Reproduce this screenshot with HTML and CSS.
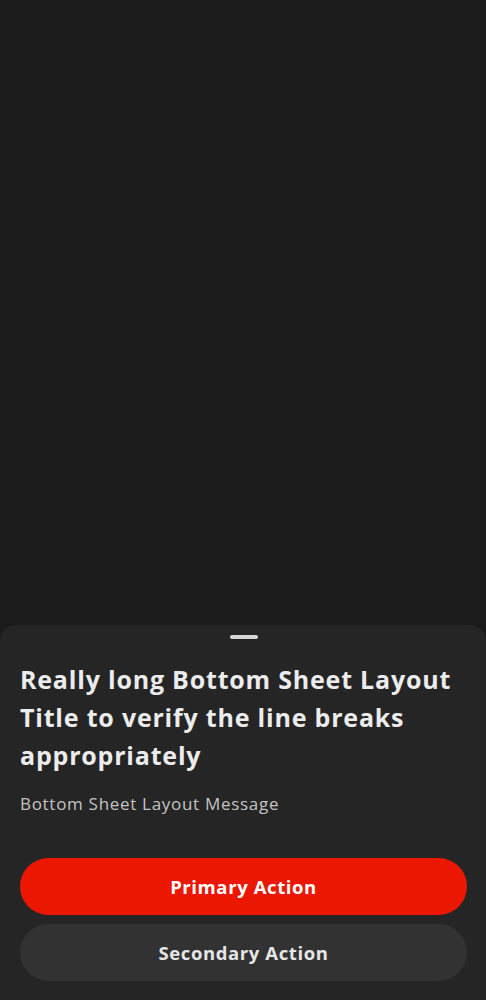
FILE: index.html
```html
<!DOCTYPE html>
<html>
<head>
<meta charset="utf-8">
<link rel="stylesheet" href="styles.css">
</head>
<body>
<div class="screen">
  <div class="backdrop"></div>
  <div class="sheet">
    <div class="handle"></div>
    <h1 class="title">Really long Bottom Sheet Layout Title to verify the line breaks appropriately</h1>
    <p class="message">Bottom Sheet Layout Message</p>
    <div class="actions">
      <button class="btn btn-primary">Primary Action</button>
      <button class="btn btn-secondary">Secondary Action</button>
    </div>
  </div>
</div>
</body>
</html>
```
FILE: styles.css
```css
html, body {
  margin: 0;
  padding: 0;
  background: #1b1b1b;
  font-family: "Open Sans", "Noto Sans", sans-serif;
}
.screen {
  height: 1000px;
  display: flex;
  flex-direction: column;
}
.backdrop {
  flex: 1;
}
.sheet {
  background: #252525;
  border-radius: 16px 16px 0 0;
  padding: 10px 19px 19px 20px;
  display: flex;
  flex-direction: column;
}
.handle {
  align-self: center;
  width: 28px;
  height: 4px;
  border-radius: 2px;
  background: #d6d6d6;
}
.title {
  margin: 21px 0 0;
  font-size: 25px;
  line-height: 38px;
  font-weight: 700;
  letter-spacing: 0.8px;
  color: #ececec;
}
.message {
  margin: 18px 0 0;
  font-size: 17px;
  line-height: 24px;
  letter-spacing: 0.7px;
  color: #c4c4c4;
}
.actions {
  margin-top: 42px;
  display: flex;
  flex-direction: column;
  gap: 9px;
}
.btn {
  height: 57px;
  border: none;
  border-radius: 29px;
  font-family: inherit;
  font-size: 18.5px;
  font-weight: 700;
  letter-spacing: 0.6px;
  padding: 0;
  width: 100%;
}
.btn-primary {
  background: #eb1700;
  color: #ffffff;
}
.btn-secondary {
  background: #323232;
  color: #e6e6e6;
}
```
